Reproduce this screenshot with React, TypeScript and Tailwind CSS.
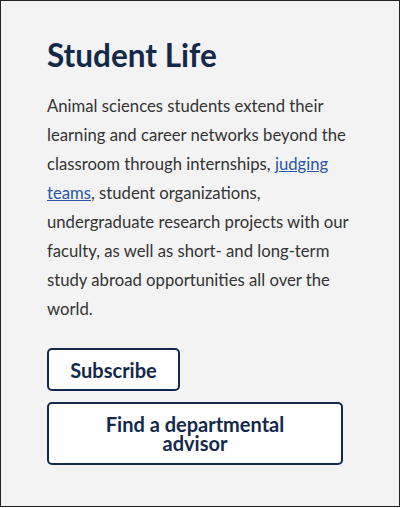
import React from 'react';

export default function App() {
  return (
    <div className="h-[507px] w-[400px] border border-[#222] bg-[#f3f3f3] font-['Lato',sans-serif]">
      <div className="pl-[46px] pr-8 pt-[34px]">
        <h2 className="text-[31.5px] font-bold leading-[40px] text-[#13294b]">Student Life</h2>
        <p className="mt-[17px] text-[16.7px] leading-[29px] text-[#333]">
          Animal sciences students extend their learning and career networks beyond the classroom through
          internships,{' '}
          <a href="#" className="text-[#2856ab] underline">
            judging teams
          </a>
          , student organizations, undergraduate research projects with our faculty, as well as short- and
          long-term study abroad opportunities all over the world.
        </p>
        <div className="mt-[24px] flex flex-col items-start gap-[11px]">
          <button
            type="button"
            className="h-[43px] w-[133px] rounded-[5px] border-2 border-[#13294b] bg-white text-[20px] font-bold text-[#13294b]"
          >
            Subscribe
          </button>
          <button
            type="button"
            className="h-[63px] w-[296px] rounded-[5px] border-2 border-[#13294b] bg-white px-12 text-[20px] font-bold leading-[19px] text-[#13294b]"
          >
            Find a departmental advisor
          </button>
        </div>
      </div>
    </div>
  );
}
